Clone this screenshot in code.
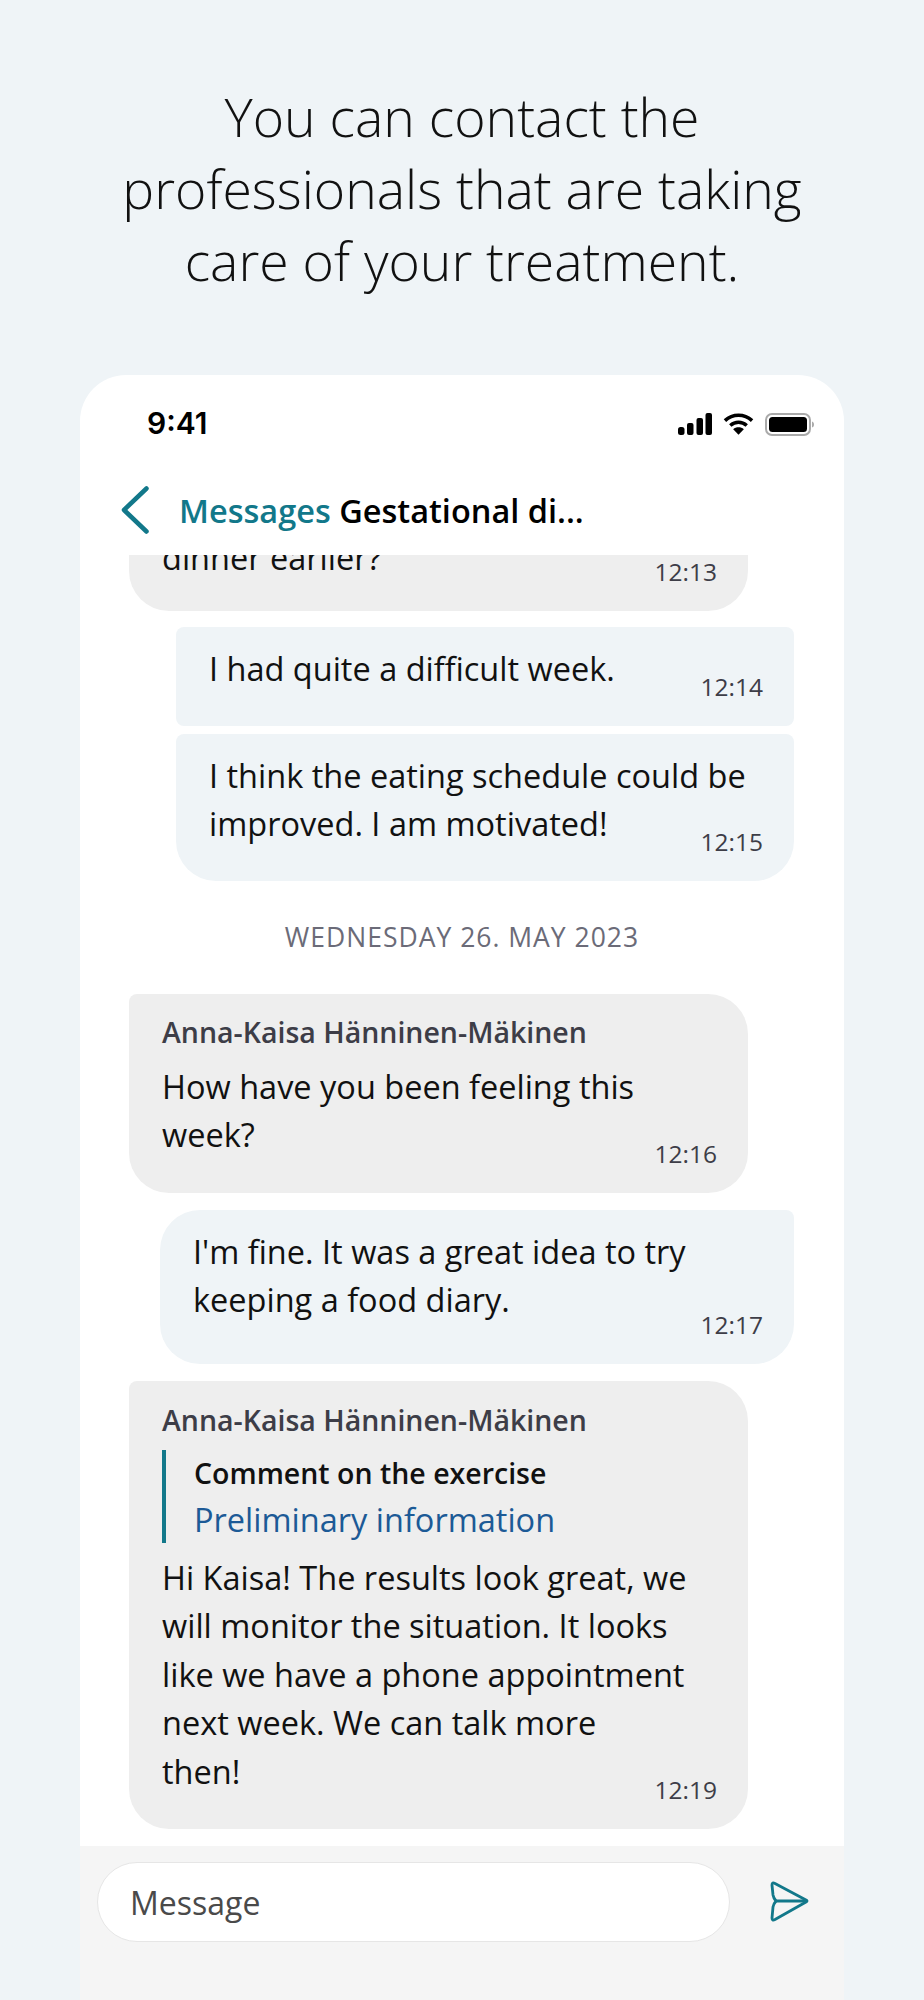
<div class="page">
  <h1>You can contact the<br />professionals that are taking<br />care of your treatment.</h1>

  <div class="phone">
    <div class="status">
      <span class="clock">9:41</span>
      <div class="status-icons">
        <svg width="34" height="22" viewBox="0 0 34 22" fill="#000">
          <rect x="0" y="14" width="6.500" height="8" rx="2.500" />
          <rect x="9" y="10" width="6.500" height="12" rx="2" />
          <rect x="18.500" y="5" width="6.500" height="17" rx="2" />
          <rect x="27.500" y="0" width="6.500" height="22" rx="2" />
        </svg>
        <svg width="31" height="22" viewBox="0 0 32 22" fill="none" stroke="#000" stroke-width="3.600">
          <path d="M2 7.500C10 0 22 0 30 7.500" />
          <path d="M7.500 12.500C12.500 8 19.500 8 24.500 12.500" />
          <path d="M16 22l-5.500-5.600c3-2.700 8-2.700 11 0z" fill="#000" stroke="none" />
        </svg>
        <svg width="49" height="23" viewBox="0 0 49 23">
          <rect x="1" y="1" width="44" height="21" rx="6" fill="#fff" stroke="#aaa" stroke-width="2" />
          <rect x="4" y="4" width="38" height="15" rx="3.500" fill="#000" />
          <path d="M47 8.500c1.500.5 2 1.500 2 3s-.5 2.500-2 3z" fill="#aaa" />
        </svg>
      </div>
    </div>

    <div class="nav">
      <svg width="28" height="48" viewBox="0 0 28 48" fill="none" stroke="#12788a" stroke-width="4.500" stroke-linecap="round" stroke-linejoin="round">
        <path d="M25.500 2.500L3 24l22.500 21.500" />
      </svg>
      <span class="nav-title"><span class="nav-link">Messages</span> Gestational di...</span>
    </div>

    <div class="thread">
      <div class="bubble in first">
        <p>What if you try to eat<br />dinner earlier?</p>
        <time>12:13</time>
      </div>

      <div class="bubble out square">
        <p>I had quite a difficult week.</p>
        <time>12:14</time>
      </div>
      <div class="bubble out tail">
        <p>I think the eating schedule could be improved. I am motivated!</p>
        <time>12:15</time>
      </div>

      <div class="date">WEDNESDAY 26. MAY 2023</div>

      <div class="bubble in short">
        <div class="sender">Anna-Kaisa Hänninen-Mäkinen</div>
        <p>How have you been feeling this week?</p>
        <time>12:16</time>
      </div>

      <div class="bubble out wide">
        <p>I'm fine. It was a great idea to try keeping a food diary.</p>
        <time>12:17</time>
      </div>

      <div class="bubble in">
        <div class="sender">Anna-Kaisa Hänninen-Mäkinen</div>
        <div class="quote">
          <div class="quote-title">Comment on the exercise</div>
          <div class="quote-link">Preliminary information</div>
        </div>
        <p>Hi Kaisa! The results look great, we will monitor the situation. It looks like we have a phone appointment next week. We can talk more<br />then!</p>
        <time>12:19</time>
      </div>
    </div>

    <div class="composer">
      <div class="input">Message</div>
      <svg class="send" width="40" height="42" viewBox="0 0 40 42" fill="none" stroke="#12788a" stroke-width="2.800" stroke-linejoin="round" stroke-linecap="round">
        <path d="M3 5Q3 2 6 3.500L37 20Q38.500 21 37 22L6 39.500Q3 41 3 38L4 27Q4.500 24 7 21Q4.500 18 4 15Z" />
        <path d="M7 21H38" />
      </svg>
    </div>
  </div>
</div>

<style>
  :global(body) {
    margin: 0;
    background: #eff4f7;
  }

  .page {
    height: 2000px;
    overflow: hidden;
    display: flex;
    flex-direction: column;
    background: #eff4f7;
    font-family: "Open Sans", sans-serif;
    color: #111;
  }

  h1 {
    flex: none;
    margin: 0;
    padding-top: 81px;
    height: 375px;
    box-sizing: border-box;
    text-align: center;
    font-size: 53.500px;
    line-height: 72px;
    font-weight: 300;
    color: #111;
  }

  .phone {
    flex: 1;
    min-height: 0;
    margin: 0 80px;
    display: flex;
    flex-direction: column;
    background: #fff;
    border-radius: 46px 46px 0 0;
    overflow: hidden;
  }

  .status {
    height: 100px;
    flex: none;
    display: flex;
    align-items: center;
    justify-content: space-between;
    padding: 0 30px 0 67px;
    box-sizing: border-box;
  }

  .clock {
    margin-bottom: 5px;
    font-family: Inter, sans-serif;
    font-weight: 600;
    font-size: 30px;
    color: #000;
  }

  .status-icons {
    display: flex;
    align-items: center;
    gap: 11px;
    margin-bottom: 2px;
  }

  .nav {
    height: 80px;
    flex: none;
    display: flex;
    align-items: center;
    padding: 0 0 10px 41px;
    gap: 30px;
    box-sizing: border-box;
  }

  .nav-title {
    font-size: 32.500px;
    font-weight: 600;
    color: #000;
  }

  .nav-link {
    color: #12788a;
  }

  .thread {
    flex: 1;
    min-height: 0;
    overflow: hidden;
    display: flex;
    flex-direction: column;
    justify-content: flex-end;
  }

  .bubble {
    position: relative;
    flex: none;
    box-sizing: border-box;
    padding: 18px 33px 32px;
    font-size: 32.500px;
    line-height: 48.500px;
  }

  .bubble p {
    margin: 0;
  }

  .in {
    width: 619px;
    margin: 0 0 17px 49px;
    padding-top: 15px;
    padding-bottom: 33px;
    background: #eeeeee;
    border-radius: 8px 40px 40px 40px;
  }

  .short {
    padding-top: 14px;
  }

  .first {
    margin-bottom: 16px;
    padding-bottom: 29px;
    border-radius: 0 0 40px 40px;
  }

  .out {
    width: 618px;
    margin: 0 50px 0 auto;
    background: #eff4f7;
  }

  .square {
    margin-bottom: 8px;
    border-radius: 8px;
  }

  .tail {
    border-radius: 8px 8px 40px 40px;
  }

  .wide {
    width: 634px;
    margin-bottom: 17px;
    padding-bottom: 39px;
    border-radius: 40px 8px 40px 40px;
  }

  time {
    position: absolute;
    right: 31px;
    bottom: 23px;
    font-size: 24.500px;
    line-height: 32px;
    color: #3d3d47;
  }

  .date {
    flex: none;
    height: 113px;
    display: flex;
    align-items: center;
    justify-content: center;
    font-size: 26.500px;
    letter-spacing: 1px;
    color: #6b6b78;
  }

  .sender {
    margin-bottom: 7px;
    font-size: 28.500px;
    font-weight: 600;
    line-height: 48px;
    color: #3d3d47;
  }

  .quote + p {
    margin-top: 11px;
  }

  .sender:has(+ .quote) {
    margin-bottom: 6px;
  }

  .quote {
    padding-left: 28px;
    border-left: 4px solid #12788a;
  }

  .quote-title {
    font-size: 28.500px;
    font-weight: 600;
    line-height: 46px;
    color: #111;
  }

  .quote-link {
    font-size: 32.500px;
    line-height: 47px;
    color: #1c5a96;
  }

  .composer {
    height: 154px;
    flex: none;
    display: flex;
    align-items: flex-start;
    background: #f5f5f5;
    padding: 16px 0 0 17px;
    box-sizing: border-box;
  }

  .input {
    width: 633px;
    height: 80px;
    box-sizing: border-box;
    padding-left: 32px;
    display: flex;
    align-items: center;
    background: #fff;
    border: 1px solid #e6e6e6;
    border-radius: 40px;
    font-size: 32px;
    color: #4a4a4a;
  }

  .send {
    margin: 18px 0 0 39px;
  }
</style>
